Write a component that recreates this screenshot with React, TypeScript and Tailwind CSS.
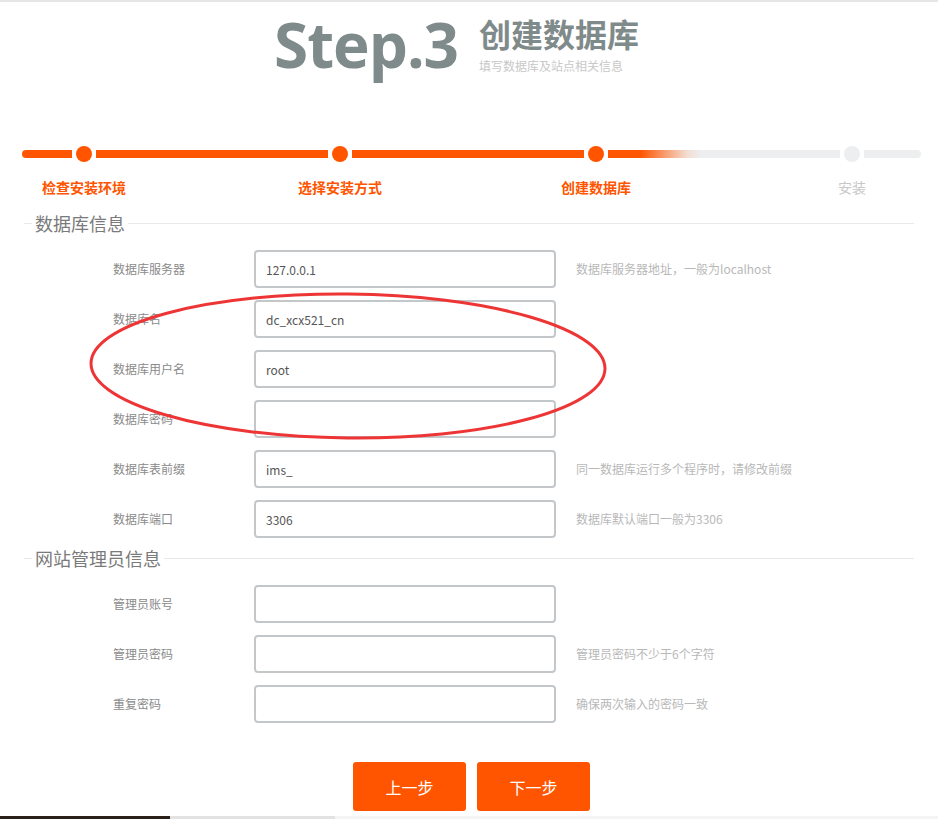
import React from 'react';

const orange = '#ff5500';

type Row = { label: string; value?: string; hint?: string };

const dbRows: Row[] = [
  { label: '数据库服务器', value: '127.0.0.1', hint: '数据库服务器地址，一般为localhost' },
  { label: '数据库名', value: 'dc_xcx521_cn' },
  { label: '数据库用户名', value: 'root' },
  { label: '数据库密码', value: '' },
  { label: '数据库表前缀', value: 'ims_', hint: '同一数据库运行多个程序时，请修改前缀' },
  { label: '数据库端口', value: '3306', hint: '数据库默认端口一般为3306' },
];

const adminRows: Row[] = [
  { label: '管理员账号' },
  { label: '管理员密码', hint: '管理员密码不少于6个字符' },
  { label: '重复密码', hint: '确保两次输入的密码一致' },
];

function FormRow({ row }: { row: Row }) {
  return (
    <div className="flex items-center h-[50px]">
      <label className="w-[141px] pl-[89px] box-content text-[12px] text-[#8a8a8a] whitespace-nowrap">{row.label}</label>
      <input
        readOnly
        value={row.value ?? ''}
        className="w-[302px] h-[38px] rounded-[4px] border-2 border-[#c4c7ca] px-[10px] text-[12px] text-[#555] outline-none bg-white"
      />
      {row.hint && <span className="ml-[20px] text-[12px] text-[#b8b8b8] whitespace-nowrap">{row.hint}</span>}
    </div>
  );
}

function Section({ title, rows, className }: { title: string; rows: Row[]; className?: string }) {
  return (
    <fieldset className={`mx-[24px] border-0 border-t border-[#e8e8e8] ${className ?? ''}`}>
      <legend className="ml-[8px] px-[3px] text-[18px] leading-[20px] text-[#7a7a7a]">{title}</legend>
      <div className="mt-[11px]">
        {rows.map((r) => (
          <FormRow key={r.label} row={r} />
        ))}
      </div>
    </fieldset>
  );
}

export default function App() {
  const steps = [
    { name: '检查安装环境', done: true },
    { name: '选择安装方式', done: true },
    { name: '创建数据库', done: true },
    { name: '安装', done: false },
  ];

  return (
    <div
      className="relative w-[938px] h-[819px] bg-white overflow-hidden"
      style={{ fontFamily: '"Noto Sans CJK SC", "Noto Sans", sans-serif' }}
    >
      <div className="h-[2px] bg-[#e6e6e9]" />

      {/* header */}
      <div className="flex items-start pl-[274px] pt-[11px]">
        <div
          className="text-[62px] leading-[62px] font-bold text-[#7f8a8a] tracking-[-1px]"
          style={{ fontFamily: '"Open Sans", sans-serif' }}
        >
          Step.3
        </div>
        <div className="ml-[21px] pt-[2px]">
          <div className="text-[32px] leading-[36px] font-bold text-[#7f8a8a] whitespace-nowrap">创建数据库</div>
          <div className="mt-[8px] text-[12px] leading-[14px] text-[#c8c8c8] whitespace-nowrap">填写数据库及站点相关信息</div>
        </div>
      </div>

      {/* progress */}
      <div className="mt-[71px] flex items-center pl-[22px]">
        <div className="w-[50px] h-[8px] rounded-l-full bg-[#ff5500]" />
        <div className="w-[16px] h-[16px] mx-[4px] rounded-full bg-[#ff5500]" />
        <div className="w-[232px] h-[8px] bg-[#ff5500]" />
        <div className="w-[16px] h-[16px] mx-[4px] rounded-full bg-[#ff5500]" />
        <div className="w-[232px] h-[8px] bg-[#ff5500]" />
        <div className="w-[16px] h-[16px] mx-[4px] rounded-full bg-[#ff5500]" />
        <div className="w-[232px] h-[8px] bg-[linear-gradient(to_right,#ff5500_0%,#ff5500_14%,#f3ddd0_34%,#eceeef_40%,#eceeef_100%)]" />
        <div className="w-[16px] h-[16px] mx-[4px] rounded-full bg-[#eceeef]" />
        <div className="w-[57px] h-[8px] rounded-r-full bg-[#eceeef]" />
      </div>
      <div className="mt-[17px] flex pl-[20px] gap-[128px]">
        {steps.map((s) => (
          <div
            key={s.name}
            className={`w-[128px] text-center text-[14px] leading-[16px] ${s.done ? 'text-[#ff5500] font-bold' : 'text-[#c8c8c8]'}`}
          >
            {s.name}
          </div>
        ))}
      </div>

      <Section title="数据库信息" rows={dbRows} className="mt-[18px]" />
      <Section title="网站管理员信息" rows={adminRows} className="mt-[4px]" />

      <div className="mt-[33px] flex justify-center gap-[11px] pl-[5px]">
        <button className="w-[113px] h-[49px] rounded-[3px] text-white text-[16px]" style={{ background: orange }}>
          上一步
        </button>
        <button className="w-[113px] h-[49px] rounded-[3px] text-white text-[16px]" style={{ background: orange }}>
          下一步
        </button>
      </div>

      {/* bottom taskbar sliver */}
      <div className="absolute left-0 right-0 bottom-0 h-[3px] flex">
        <div className="w-[170px] bg-[#2b2018]" />
        <div className="w-[165px] bg-[#e2e2e2]" />
        <div className="flex-1 bg-[#f4f4f4]" />
      </div>

      {/* red annotation ellipse */}
      <svg className="absolute left-0 top-0 pointer-events-none" width="938" height="819">
        <ellipse cx="348" cy="366" rx="257" ry="72" fill="none" stroke="#ee3535" strokeWidth="3" transform="rotate(0.6 348 366)" />
      </svg>
    </div>
  );
}
